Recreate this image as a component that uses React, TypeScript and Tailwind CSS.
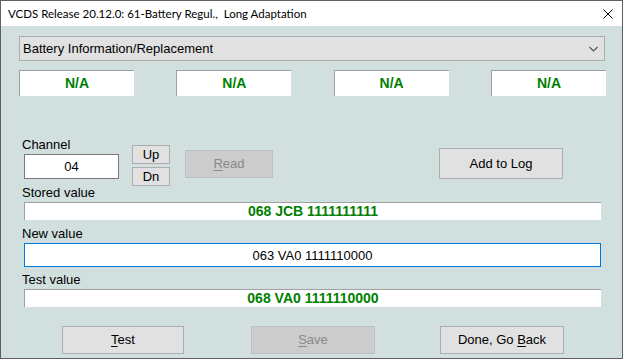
import React from 'react';

const font = { fontFamily: '"Liberation Sans", Arial, sans-serif' };

const NaBox = () => (
  <div className="w-[115px] h-[26px] bg-white border-t border-l border-[#a0a0a0] flex items-center justify-center text-[14px] font-bold text-[#008000]">
    N/A
  </div>
);

const Btn = ({
  label,
  u,
  rest,
  disabled,
  className,
}: {
  label?: string;
  u?: string;
  rest?: string;
  disabled?: boolean;
  className: string;
}) => (
  <div
    className={`${className} flex items-center justify-center text-[13px] border ${
      disabled ? 'bg-[#cccccc] border-[#bfbfbf] text-[#8a8a8a]' : 'bg-[#e1e1e1] border-[#adadad] text-black'
    }`}
  >
    <span className="whitespace-pre">
      {label}
      {u && <span className="underline underline-offset-2">{u}</span>}
      {rest}
    </span>
  </div>
);

const ValueField = ({ text, green, active }: { text: string; green?: boolean; active?: boolean }) => (
  <div
    className={`ml-[23px] w-[577px] bg-white flex items-center justify-center text-[13px] ${
      active ? 'h-[24px] border border-[#0078d7] text-black' : 'h-[18px] border-t border-l border-[#a0a0a0]'
    } ${green ? 'text-[14px] font-bold text-[#008000]' : ''}`}
  >
    {text}
  </div>
);

export default function App() {
  return (
    <div className="w-[623px] h-[359px] border border-[#5f5f5f] bg-[#d1dfdf] flex flex-col overflow-hidden" style={font}>
      {/* title bar */}
      <div className="h-[25px] bg-white flex items-center justify-between pl-[7px] pr-[9px] shrink-0">
        <span className="text-[11.5px] text-black whitespace-pre" style={{ fontFamily: 'Lato, sans-serif' }}>
          VCDS Release 20.12.0: 61-Battery Regul.,  Long Adaptation
        </span>
        <svg width="10" height="10" viewBox="0 0 10 10">
          <path d="M0.5 0.5 L9.5 9.5 M9.5 0.5 L0.5 9.5" stroke="#000" strokeWidth="1" />
        </svg>
      </div>

      {/* dropdown */}
      <div className="ml-[18px] mt-[10px] w-[586px] h-[25px] bg-[#e1e1e1] border border-[#adadad] flex items-center justify-between pl-[3px] pr-[6px] text-[13px] text-black">
        <span>Battery Information/Replacement</span>
        <svg width="9" height="6" viewBox="0 0 9 6">
          <path d="M0.5 1 L4.5 5 L8.5 1" stroke="#555" strokeWidth="1.2" fill="none" />
        </svg>
      </div>

      {/* N/A row */}
      <div className="ml-[18px] mt-[9px] w-[587px] flex justify-between">
        <NaBox />
        <NaBox />
        <NaBox />
        <NaBox />
      </div>

      {/* channel row */}
      <div className="mt-[41px] h-[48px] flex items-start text-[13px] text-black">
        <div className="ml-[21px] flex flex-col">
          <div className="leading-[15px]">Channel</div>
          <div className="ml-[2px] mt-[2px] w-[95px] h-[25px] bg-white border border-[#7a7a7a] flex items-center justify-center">
            04
          </div>
        </div>
        <div className="ml-[13px] mt-[8px] flex flex-col gap-[3px]">
          <Btn className="w-[38px] h-[19px]" label="Up" />
          <Btn className="w-[38px] h-[19px]" label="Dn" />
        </div>
        <Btn className="ml-[15px] mt-[13px] w-[88px] h-[28px]" u="R" rest="ead" disabled />
        <Btn className="ml-[166px] mt-[11px] w-[124px] h-[31px]" label="Add to Log" />
      </div>

      {/* values */}
      <div className="text-[13px] text-black leading-[15px]">
        <div className="ml-[21px]">Stored value</div>
        <div className="mt-[2px]">
          <ValueField text="068 JCB 1111111111" green />
        </div>
        <div className="ml-[21px] mt-[6px]">New value</div>
        <div className="mt-[2px]">
          <ValueField text="063 VA0 1111110000" active />
        </div>
        <div className="ml-[21px] mt-[5px]">Test value</div>
        <div className="mt-[2px]">
          <ValueField text="068 VA0 1111110000" green />
        </div>
      </div>

      {/* bottom buttons */}
      <div className="mt-[19px] flex">
        <Btn className="ml-[61px] w-[122px] h-[28px]" u="T" rest="est" />
        <Btn className="ml-[67px] w-[124px] h-[28px]" u="S" rest="ave" disabled />
        <Btn className="ml-[65px] w-[124px] h-[28px]" label="Done, Go " u="B" rest="ack" />
      </div>
    </div>
  );
}
